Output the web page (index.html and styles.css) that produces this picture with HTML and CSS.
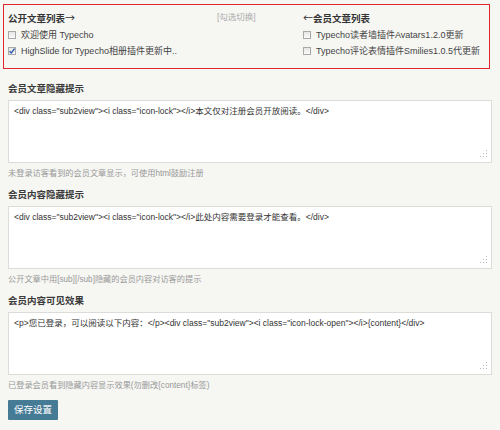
FILE: index.html
```html
<!DOCTYPE html>
<html lang="zh-CN">
<head>
<meta charset="utf-8">
<title>设置</title>
<link rel="stylesheet" href="styles.css">
</head>
<body>
<div class="page">
  <div class="box">
    <div class="col">
      <div class="col-title">公开文章列表<span class="arrow">→</span></div>
      <div class="check-row"><span class="cb"></span><span>欢迎使用 Typecho</span></div>
      <div class="check-row"><span class="cb checked"><svg viewBox="0 0 8 8" width="8" height="8"><path d="M1.5 4.2 L3.3 6 L6.6 1.6" fill="none" stroke="#2a55a8" stroke-width="1.4"/></svg></span><span>HighSlide for Typecho相册插件更新中..</span></div>
    </div>
    <div class="toggle">[勾选切换]</div>
    <div class="col">
      <div class="col-title"><span class="arrow">←</span>会员文章列表</div>
      <div class="check-row"><span class="cb"></span><span>Typecho读者墙插件Avatars1.2.0更新</span></div>
      <div class="check-row"><span class="cb"></span><span>Typecho评论表情插件Smilies1.0.5代更新</span></div>
    </div>
  </div>

  <div class="field">
    <div class="label">会员文章隐藏提示</div>
    <div class="ta-wrap">
      <textarea class="ta" readonly>&lt;div class="sub2view"&gt;&lt;i class="icon-lock"&gt;&lt;/i&gt;本文仅对注册会员开放阅读。&lt;/div&gt;</textarea>
      <span class="grip"></span>
    </div>
    <div class="hint">未登录访客看到的会员文章显示，可使用html鼓励注册</div>
  </div>

  <div class="field">
    <div class="label">会员内容隐藏提示</div>
    <div class="ta-wrap">
      <textarea class="ta" readonly>&lt;div class="sub2view"&gt;&lt;i class="icon-lock"&gt;&lt;/i&gt;此处内容需要登录才能查看。&lt;/div&gt;</textarea>
      <span class="grip"></span>
    </div>
    <div class="hint">公开文章中用[sub][/sub]隐藏的会员内容对访客的提示</div>
  </div>

  <div class="field">
    <div class="label">会员内容可见效果</div>
    <div class="ta-wrap">
      <textarea class="ta" readonly>&lt;p&gt;您已登录，可以阅读以下内容：&lt;/p&gt;&lt;div class="sub2view"&gt;&lt;i class="icon-lock-open"&gt;&lt;/i&gt;{content}&lt;/div&gt;</textarea>
      <span class="grip"></span>
    </div>
    <div class="hint">已登录会员看到隐藏内容显示效果(勿删改{content}标签)</div>
  </div>

  <button class="btn" type="button">保存设置</button>
</div>
</body>
</html>
```

FILE: styles.css
```css
html, body {
  margin: 0;
  background: #f6f6f3;
}
body {
  font-family: "Liberation Sans", "Noto Sans CJK SC", sans-serif;
  color: #444;
}
.page {
  padding: 4px 8px 0 8px;
}
.box {
  margin: 0 2px 0 -5px;
  border: 1px solid #e2262c;
  padding: 4px 4px 9px 4px;
  display: grid;
  grid-template-columns: 209px 86px 1fr;
}
.col-title {
  font-size: 9.5px;
  font-weight: bold;
  line-height: 17px;
  color: #333;
}
.arrow {
  font-family: "Noto Sans CJK SC", sans-serif;
  font-weight: normal;
  font-size: 10px;
}
.check-row {
  display: flex;
  align-items: center;
  gap: 5px;
  font-size: 9px;
  line-height: 16px;
  color: #444;
}
.cb {
  width: 8px;
  height: 8px;
  box-sizing: border-box;
  border: 1px solid #a9a9a9;
  background: linear-gradient(#e6e6e6, #fafafa);
  display: flex;
  align-items: center;
  justify-content: center;
  flex: none;
}
.cb svg {
  display: block;
  margin: -1px;
}
.toggle {
  font-size: 8.5px;
  line-height: 17px;
  color: #aaa;
}
.field {
  margin-top: 11px;
}
.field + .field {
  margin-top: 5px;
}
.label {
  font-size: 9.5px;
  font-weight: bold;
  line-height: 18px;
  color: #3a3a3a;
}
.ta-wrap {
  position: relative;
  margin-top: 2px;
}
.ta {
  display: block;
  width: 100%;
  height: 63px;
  box-sizing: border-box;
  margin: 0;
  border: 1px solid #dcdcd8;
  background: #fff;
  padding: 3px 5px;
  font-family: "Liberation Sans", "Noto Sans CJK SC", sans-serif;
  font-size: 8.5px;
  line-height: 14px;
  color: #333;
  resize: none;
  outline: none;
  overflow: hidden;
}
.grip {
  position: absolute;
  right: 5px;
  bottom: 6px;
  width: 8px;
  height: 8px;
  background:
    radial-gradient(circle, #bbb 0.8px, transparent 1px) 6px 0 / 3px 3px no-repeat,
    radial-gradient(circle, #bbb 0.8px, transparent 1px) 3px 3px / 3px 3px no-repeat,
    radial-gradient(circle, #bbb 0.8px, transparent 1px) 6px 3px / 3px 3px no-repeat,
    radial-gradient(circle, #bbb 0.8px, transparent 1px) 0 6px / 3px 3px no-repeat,
    radial-gradient(circle, #bbb 0.8px, transparent 1px) 3px 6px / 3px 3px no-repeat,
    radial-gradient(circle, #bbb 0.8px, transparent 1px) 6px 6px / 3px 3px no-repeat;
}
.hint {
  margin-top: 4px;
  font-size: 8.2px;
  line-height: 14px;
  color: #999;
}
.btn {
  display: block;
  margin-top: 7px;
  width: 50px;
  height: 20px;
  padding: 0;
  border: none;
  border-radius: 1px;
  background: #467b96;
  color: #fff;
  font-family: "Liberation Sans", "Noto Sans CJK SC", sans-serif;
  font-size: 9.5px;
  line-height: 20px;
  text-align: center;
}
```
